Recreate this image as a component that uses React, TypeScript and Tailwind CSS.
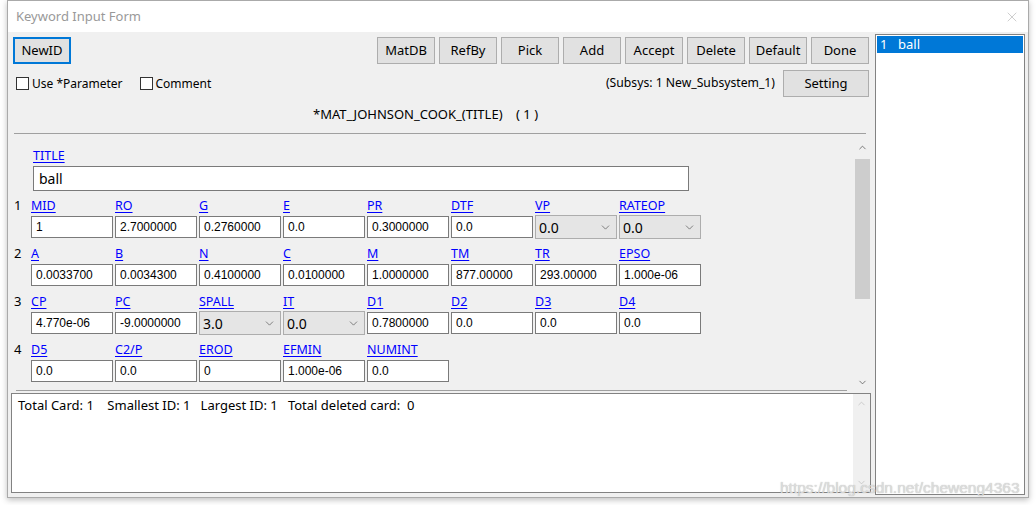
import { ChevronDown, ChevronUp, X } from "lucide-react";

type Field = { label: string; value: string; select?: boolean };

const rows: Field[][] = [
  [
    { label: "MID", value: "1" },
    { label: "RO", value: "2.7000000" },
    { label: "G", value: "0.2760000" },
    { label: "E", value: "0.0" },
    { label: "PR", value: "0.3000000" },
    { label: "DTF", value: "0.0" },
    { label: "VP", value: "0.0", select: true },
    { label: "RATEOP", value: "0.0", select: true },
  ],
  [
    { label: "A", value: "0.0033700" },
    { label: "B", value: "0.0034300" },
    { label: "N", value: "0.4100000" },
    { label: "C", value: "0.0100000" },
    { label: "M", value: "1.0000000" },
    { label: "TM", value: "877.00000" },
    { label: "TR", value: "293.00000" },
    { label: "EPSO", value: "1.000e-06" },
  ],
  [
    { label: "CP", value: "4.770e-06" },
    { label: "PC", value: "-9.0000000" },
    { label: "SPALL", value: "3.0", select: true },
    { label: "IT", value: "0.0", select: true },
    { label: "D1", value: "0.7800000" },
    { label: "D2", value: "0.0" },
    { label: "D3", value: "0.0" },
    { label: "D4", value: "0.0" },
  ],
  [
    { label: "D5", value: "0.0" },
    { label: "C2/P", value: "0.0" },
    { label: "EROD", value: "0" },
    { label: "EFMIN", value: "1.000e-06" },
    { label: "NUMINT", value: "0.0" },
  ],
];

const buttons = ["MatDB", "RefBy", "Pick", "Add", "Accept", "Delete", "Default", "Done"];

function Btn({ children, w = "w-[58px]" }: { children: string; w?: string }) {
  return (
    <div
      className={`${w} h-[27px] flex items-center justify-center border border-[#adadad] bg-[#e1e1e1] text-[13px] text-black`}
    >
      {children}
    </div>
  );
}

function Check({ label }: { label: string }) {
  return (
    <div className="flex items-center gap-[3px]">
      <div className="w-[13px] h-[13px] border border-[#333] bg-white" />
      <span className="text-[12px] text-black">{label}</span>
    </div>
  );
}

function Cell({ f }: { f: Field }) {
  return (
    <div className="w-[82px] flex flex-col">
      <div className="h-[20px] flex items-center">
        <span className="text-[12.5px] leading-none text-[#0000ff] underline underline-offset-2">{f.label}</span>
      </div>
      {f.select ? (
        <div className="h-[24px] -my-[1px] border border-[#adadad] bg-[#e5e5e5] flex items-center justify-between pl-[3px] pr-[4px]">
          <span className="text-[14px] text-black">{f.value}</span>
          <ChevronDown size={13} strokeWidth={1.3} className="text-[#555]" />
        </div>
      ) : (
        <div className="h-[22px] border border-[#7a7a7a] bg-white flex items-center pl-[4px] font-['Liberation_Sans',Arial,sans-serif] text-[12px] text-black">
          {f.value}
        </div>
      )}
    </div>
  );
}

export default function App() {
  return (
    <div className="w-[1036px] h-[505px] bg-white relative font-['Noto_Sans',sans-serif] overflow-hidden">
      <div className="ml-[7px] w-[1022px] h-[498px] border border-[#aaaaaa] shadow-[0_2px_6px_rgba(0,0,0,0.25)] flex flex-col">
        {/* Title bar */}
        <div className="h-[31px] bg-white flex items-center justify-between pl-[8px] pr-[8px]">
          <span className="text-[13px] text-[#999999]">Keyword Input Form</span>
          <X size={16} strokeWidth={1} className="text-[#b5b5b5]" />
        </div>

        <div className="flex-1 bg-[#f0f0f0] flex">
          {/* Left panel */}
          <div className="w-[866px] flex flex-col">
            <div className="flex items-center justify-between pl-[5px] pr-[5px] pt-[5px]">
              <div className="w-[58px] h-[27px] flex items-center justify-center border-2 border-[#0078d7] bg-[#e1e1e1] text-[13px]">
                NewID
              </div>
              <div className="flex gap-[4px]">
                {buttons.map((b) => (
                  <Btn key={b}>{b}</Btn>
                ))}
              </div>
            </div>

            <div className="flex items-center justify-between pl-[8px] pr-[5px] mt-[6px]">
              <div className="flex items-center gap-[17px]">
                <Check label="Use *Parameter" />
                <Check label="Comment" />
              </div>
              <div className="flex items-center gap-[8px]">
                <span className="text-[12.2px]">(Subsys: 1 New_Subsystem_1)</span>
                <Btn w="w-[86px]">Setting</Btn>
              </div>
            </div>

            <div className="h-[36px] flex items-center pl-[305px] text-[13px] whitespace-pre">
              {"*MAT_JOHNSON_COOK_(TITLE)    ( 1 )"}
            </div>

            <div className="ml-[6px] mr-[8px] h-px bg-[#a0a0a0]" />

            {/* Scroll area */}
            <div className="ml-[6px] mr-[3px] h-[256px] flex">
              <div className="flex-1 pt-[12px]">
                <div className="pl-[19px]">
                  <div className="h-[20px] flex items-center">
                    <span className="text-[12.5px] leading-none text-[#0000ff] underline underline-offset-2">TITLE</span>
                  </div>
                  <div className="w-[656px] h-[25px] border border-[#7a7a7a] bg-white flex items-center pl-[5px] text-[14px]">
                    ball
                  </div>
                </div>
                <div className="mt-[5px] flex flex-col gap-[6px]">
                  {rows.map((r, i) => (
                    <div key={i} className="flex">
                      <div className="w-[17px] h-[20px] flex items-center text-[13px]">{i + 1}</div>
                      <div className="flex gap-[2px]">
                        {r.map((f) => (
                          <Cell key={f.label} f={f} />
                        ))}
                      </div>
                    </div>
                  ))}
                </div>
              </div>
              <div className="w-[17px] flex flex-col items-center pt-[8px] pb-[2px]">
                <ChevronUp size={11} strokeWidth={1.6} className="text-[#505050]" />
                <div className="w-[15px] h-[140px] bg-[#cdcdcd] mt-[6px]" />
                <div className="flex-1" />
                <ChevronDown size={11} strokeWidth={1.6} className="text-[#505050]" />
              </div>
            </div>

            <div className="ml-[8px] w-[831px] h-px bg-[#a0a0a0]" />

            {/* Message box */}
            <div className="ml-[3px] mr-[3px] mt-[2px] h-[100px] border border-[#828282] bg-white flex">
              <div className="flex-1 pl-[6px] pt-[2px] text-[13px] whitespace-pre">
                {"Total Card: 1    Smallest ID: 1   Largest ID: 1   Total deleted card:  0"}
              </div>
              <div className="w-[17px] bg-[#f0f0f0] flex flex-col items-center justify-between py-[4px]">
                <ChevronUp size={11} strokeWidth={1.5} className="text-[#bbbbbb]" />
                <ChevronDown size={11} strokeWidth={1.5} className="text-[#bbbbbb]" />
              </div>
            </div>
          </div>

          {/* Right list */}
          <div className="ml-[1px] mt-[2px] mb-[2px] w-[150px] border border-[#828282] bg-white p-px">
            <div className="h-[17px] bg-[#0078d7] flex items-center text-white text-[13px] pl-[3px]">
              <span className="w-[18px]">1</span>
              <span>ball</span>
            </div>
          </div>
        </div>
      </div>

      <div className="absolute left-[780px] top-[476px] text-[15.5px] font-['Liberation_Sans',Arial,sans-serif] text-[rgba(225,225,225,0.9)] [text-shadow:0_0_1px_rgba(120,120,120,0.6)]">
        https://blog.csdn.net/cheweng4363
      </div>
    </div>
  );
}
